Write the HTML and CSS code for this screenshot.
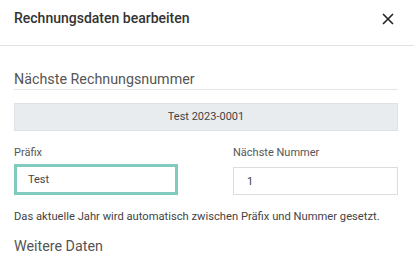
FILE: index.html
```html
<!DOCTYPE html>
<html lang="de">

<head>
    <meta charset="UTF-8">
    <title>Rechnungsdaten bearbeiten</title>
    <link rel="stylesheet" href="styles.css">
</head>

<body>
    <div class="modal">
        <div class="modal-header">
            <h2 class="modal-title">Rechnungsdaten bearbeiten</h2>
            <button class="close" type="button" aria-label="Schließen">
                <svg width="12" height="12" viewBox="0 0 12 12">
                    <path d="M1 1L11 11M11 1L1 11" stroke="#222" stroke-width="1.6" fill="none" />
                </svg>
            </button>
        </div>
        <div class="modal-body">
            <h3 class="section-title">Nächste Rechnungsnummer</h3>
            <div class="preview">Test 2023-0001</div>
            <div class="form-row">
                <div class="form-group">
                    <label for="prefix">Präfix</label>
                    <input type="text" id="prefix" class="focused" value="Test">
                </div>
                <div class="form-group">
                    <label for="number">Nächste Nummer</label>
                    <input type="text" id="number" value="1">
                </div>
            </div>
            <p class="help">Das aktuelle Jahr wird automatisch zwischen Präfix und Nummer gesetzt.</p>
            <h3 class="section-title plain">Weitere Daten</h3>
        </div>
    </div>
</body>

</html>
```

FILE: styles.css
```css
* {
    margin: 0;
    padding: 0;
    box-sizing: border-box;
}

body {
    font-family: Roboto, "Liberation Sans", sans-serif;
    background-color: #fff;
    color: #444;
}

.modal-header {
    height: 46px;
    display: flex;
    align-items: flex-start;
    justify-content: space-between;
    padding: 8px 20px 0 14px;
    border-bottom: 1px solid #e3e3e3;
}

.modal-title {
    font-size: 14px;
    font-weight: 500;
    line-height: 20px;
    color: #333;
}

.close {
    border: none;
    background: none;
    width: 12px;
    height: 12px;
    margin-top: 5px;
    display: flex;
}

.modal-body {
    padding: 0 16px 0 14px;
}

.section-title {
    font-size: 14.3px;
    font-weight: 400;
    line-height: 17px;
    color: #555;
    margin-top: 25px;
    padding-bottom: 1px;
    border-bottom: 1px solid #e5e5e5;
}

.section-title.plain {
    border-bottom: none;
    margin-top: 14px;
}

.preview {
    margin-top: 13px;
    height: 28px;
    line-height: 26px;
    text-align: center;
    font-size: 11px;
    color: #444;
    background-color: #e9ecef;
    border: 1px solid #dee2e6;
}

.form-row {
    display: flex;
    justify-content: space-between;
    margin-top: 15px;
}

.form-group {
    width: 165px;
}

.form-group label {
    display: block;
    font-size: 11px;
    line-height: 14px;
    color: #555;
    margin-bottom: 7px;
}

.form-group input {
    width: 100%;
    height: 28px;
    padding: 0 13px;
    font-family: inherit;
    font-size: 11px;
    color: #444;
    border: 1px solid #ddd;
    outline: none;
}

.form-group input.focused {
    width: 164px;
    height: 31px;
    margin-top: -3px;
    padding: 0 11px;
    border: 3px solid #80cbbd;
}

.help {
    font-size: 11.2px;
    line-height: 14px;
    margin-top: 15px;
    color: #444;
}
```
